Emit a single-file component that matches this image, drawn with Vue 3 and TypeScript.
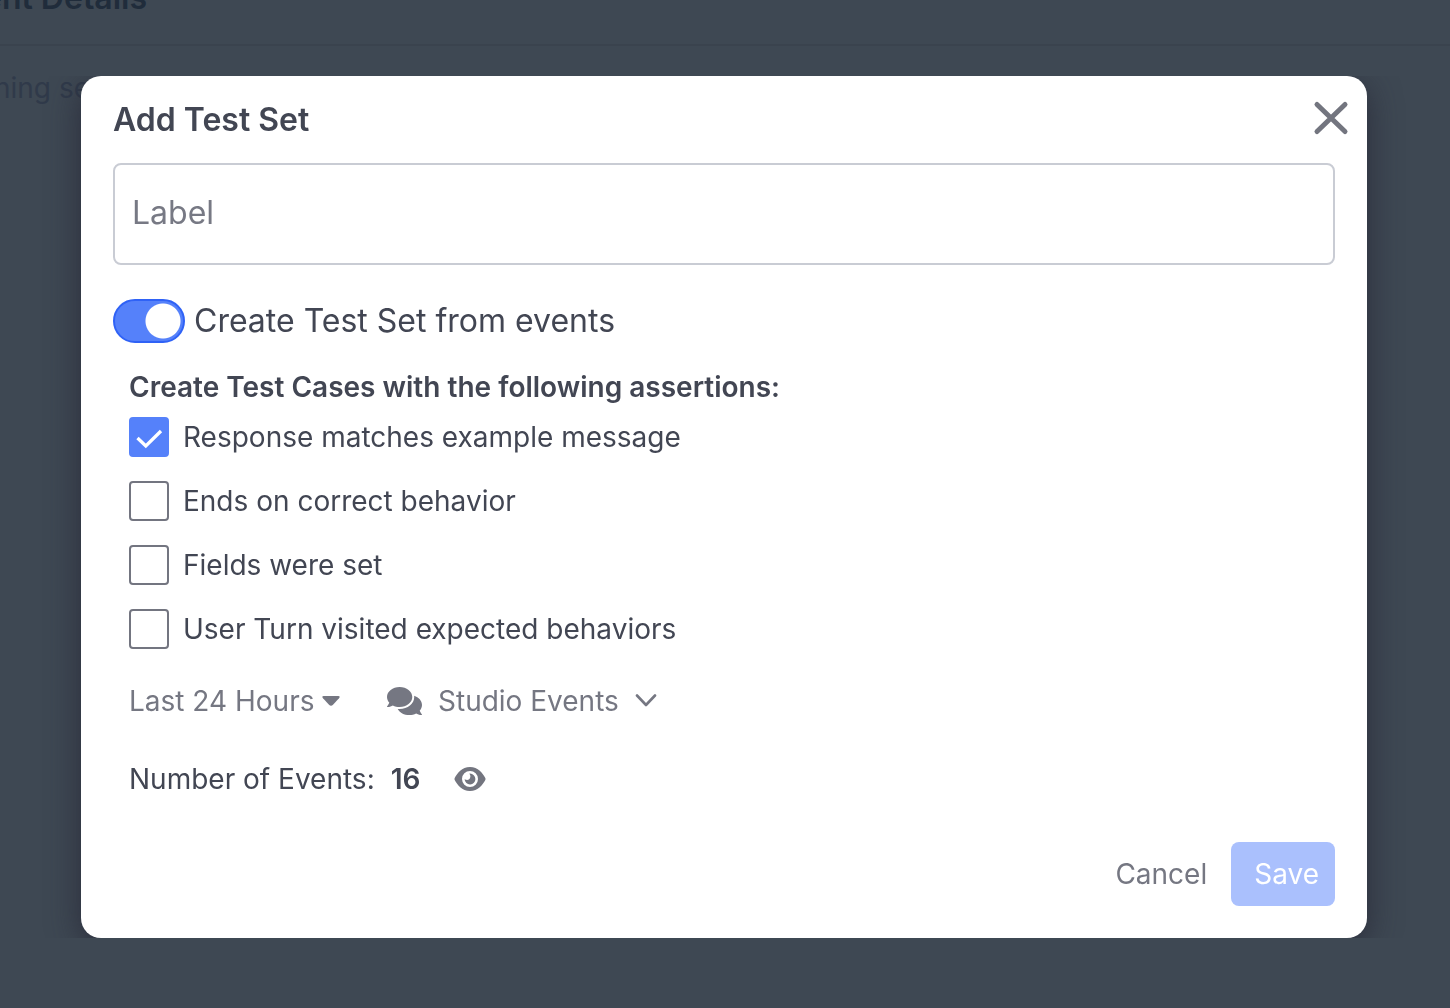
<script setup lang="ts">
import { ref } from 'vue'

interface Assertion {
  id: string
  label: string
  checked: boolean
}

const label = ref('')
const fromEvents = ref(true)
const range = ref('Last 24 Hours')
const source = ref('Studio Events')
const eventCount = ref(16)

const assertions = ref<Assertion[]>([
  { id: 'response', label: 'Response matches example message', checked: true },
  { id: 'behavior', label: 'Ends on correct behavior', checked: false },
  { id: 'fields', label: 'Fields were set', checked: false },
  { id: 'turn', label: 'User Turn visited expected behaviors', checked: false },
])
</script>

<template>
  <main class="page">
    <header class="page-header">
      <h1 class="page-title">ent Details</h1>
    </header>
    <p class="page-text">ning se</p>
  </main>

  <div class="overlay">
    <div class="frame">
      <form class="dialog" role="dialog" aria-labelledby="dialog-title" @submit.prevent>
        <header class="dialog-header">
          <h2 id="dialog-title" class="dialog-title">Add Test Set</h2>
          <button type="button" class="close" aria-label="Close">
            <svg width="36" height="36" viewBox="0 0 36 36" fill="none" stroke="currentColor" stroke-width="5" stroke-linecap="round">
              <path d="M4 4.500L32 31.500M32 4.500L4 31.500" />
            </svg>
          </button>
        </header>

        <input v-model="label" class="text-input" type="text" placeholder="Label" aria-label="Label" />

        <label class="toggle-row">
          <input v-model="fromEvents" class="toggle" type="checkbox" role="switch" />
          <span>Create Test Set from events</span>
        </label>

        <div class="options">
          <fieldset class="assertions">
            <legend>Create Test Cases with the following assertions:</legend>
            <label v-for="item in assertions" :key="item.id" class="check-row">
              <span class="check">
                <input v-model="item.checked" class="box" type="checkbox" />
                <svg v-if="item.checked" class="tick" width="40" height="40" viewBox="0 0 40 40" fill="none" stroke="#fff" stroke-width="3.300">
                  <path d="M8.500 21L16.800 29L32 14" />
                </svg>
              </span>
              <span>{{ item.label }}</span>
            </label>
          </fieldset>

          <div class="filters">
            <label class="filter">
              <select v-model="range" class="select" aria-label="Time range">
                <option>Last 24 Hours</option>
              </select>
              <svg width="18" height="12" viewBox="0 0 18 12" fill="currentColor">
                <path d="M1.600 1H16.400Q18.600 1.300 17 3.200L11 9.800Q9 11.800 7 9.800L1 3.200Q-.6 1.300 1.600 1Z" />
              </svg>
            </label>
            <label class="filter source">
              <svg width="35" height="28" viewBox="0 32 576 448" preserveAspectRatio="none" fill="currentColor">
                <path d="M416 192c0-88.400-93.100-160-208-160S0 103.600 0 192c0 34.300 14.100 65.900 38 92-13.400 30.200-35.500 54.200-35.800 54.500-2.200 2.300-2.800 5.700-1.500 8.700S4.800 352 8 352c36.600 0 66.900-12.300 88.700-25 32.200 15.700 70.300 25 111.300 25 114.900 0 208-71.600 208-160zm122 220c23.900-26 38-57.700 38-92 0-66.900-53.500-124.200-129.300-148.100.9 6.600 1.300 13.300 1.300 20.100 0 105.900-107.700 192-240 192-10.800 0-21.300-.8-31.700-1.900C207.800 439.600 281.800 480 368 480c41 0 79.100-9.200 111.300-25 21.800 12.700 52.100 25 88.700 25 3.200 0 6.100-1.900 7.300-4.800 1.300-2.900.7-6.300-1.500-8.700-.3-.3-22.400-24.200-35.800-54.500z" />
              </svg>
              <select v-model="source" class="select" aria-label="Event source">
                <option>Studio Events</option>
              </select>
              <svg width="22" height="14" viewBox="0 0 22 14" fill="none" stroke="currentColor" stroke-width="2.600" stroke-linecap="round" stroke-linejoin="round">
                <path d="M2 1.500L11 11L20 1.500" />
              </svg>
            </label>
          </div>

          <div class="count-row">
            <span>Number of Events:</span>
            <strong class="count">{{ eventCount }}</strong>
            <button type="button" class="preview" aria-label="Preview events">
              <svg width="32" height="24" viewBox="0 0 32 24" fill="currentColor">
                <path fill-rule="evenodd" d="M.7 11C3 6.500 8 0 16 0S29 6.500 31.300 11Q31.800 12 31.300 13C29 17.500 24 24 16 24S3 17.500 .7 13Q.2 12 .7 11ZM16 4A8 8 0 1 0 16 20A8 8 0 0 0 16 4Z" />
                <path d="M16 6.600A5.400 5.400 0 1 1 10.600 12.300Q14.500 14 16 11.200Q17 8.800 15.400 6.600Z" />
              </svg>
            </button>
          </div>
        </div>

        <footer class="actions">
          <button type="button" class="cancel">Cancel</button>
          <button type="submit" class="save" disabled>Save</button>
        </footer>
      </form>
    </div>
  </div>
</template>

<style>
body {
  margin: 0;
  background: #3e4853;
  font-family: Inter, "Liberation Sans", sans-serif;
}
</style>

<style scoped>
.page {
  overflow: hidden;
  height: 100vh;
  color: #303a4a;
}

.page-header {
  display: flex;
  align-items: flex-end;
  height: 44px;
  border-bottom: 2px solid #3a434e;
}

.page-title {
  margin: 0 0 26px -17px;
  color: #202c3b;
  font-size: 32px;
  font-weight: 600;
  line-height: 40px;
}

.page-text {
  margin: 24px 0 0 -6px;
  font-size: 28px;
  line-height: 36px;
}

.overlay {
  position: fixed;
  inset: 0;
  overflow-y: auto;
}

/* Clips the dialog shadow above and below, leaving it on the sides only. */
.frame {
  overflow: hidden;
  margin-top: 76px;
  padding: 0 83px 0 81px;
}

.dialog {
  box-sizing: border-box;
  padding: 24px 32px 32px;
  border-radius: 20px;
  background: #fff;
  box-shadow: 0 8px 32px rgb(38 38 52 / 80%);
  color: #424653;
  font-size: 28px;
  line-height: 40px;
}

button,
input,
select {
  margin: 0;
  font: inherit;
}

.dialog-header {
  display: flex;
  align-items: center;
  justify-content: space-between;
  height: 40px;
  margin-bottom: 23px;
}

.dialog-title {
  margin: 0;
  font-size: 32px;
  font-weight: 600;
  line-height: 40px;
}

.close {
  display: flex;
  margin: 0 -14px 4px 0;
  padding: 0;
  border: 0;
  background: none;
  color: #73757f;
}

.text-input {
  display: block;
  box-sizing: border-box;
  width: 100%;
  height: 102px;
  padding: 0 17px 4px;
  border: 2px solid #c9ccd4;
  border-radius: 8px;
  background: #fff;
  color: #424653;
  font-size: 32px;
}

.text-input::placeholder {
  color: #777984;
  opacity: 1;
}

.toggle-row {
  display: flex;
  align-items: center;
  gap: 9px;
  width: fit-content;
  margin-top: 34px;
  font-size: 32px;
  line-height: 44px;
}

.toggle {
  appearance: none;
  box-sizing: border-box;
  width: 72px;
  height: 44px;
  border: 2px solid #2f62f6;
  border-radius: 22px;
  background: radial-gradient(circle at 48px 20px, #fff 17px, #5581fa 18px);
}

.options {
  padding: 0 16px;
}

.assertions {
  display: flex;
  flex-direction: column;
  gap: 24px;
  min-width: 0;
  margin: 24px 0 0;
  padding: 0;
  border: 0;
}

.assertions legend {
  margin-bottom: 10px;
  padding: 0;
  font-weight: 600;
}

.check-row {
  display: flex;
  align-items: center;
  gap: 14px;
  width: fit-content;
}

.check {
  display: grid;
}

.box,
.tick {
  grid-area: 1 / 1;
}

.tick {
  pointer-events: none;
}

.box {
  appearance: none;
  box-sizing: border-box;
  width: 40px;
  height: 40px;
  border: 2px solid #737580;
  border-radius: 4px;
  background: #fff;
}

.box:checked {
  border-color: #5581fa;
  background: #5581fa;
}

.filters {
  display: flex;
  align-items: center;
  gap: 47px;
  margin-top: 32px;
  color: #757782;
}

.filter {
  display: flex;
  align-items: center;
  gap: 7px;
}

.source {
  gap: 16px;
}

.select {
  appearance: none;
  padding: 0;
  border: 0;
  background: none;
  color: inherit;
  line-height: 40px;
}

.count-row {
  display: flex;
  align-items: center;
  margin-top: 38px;
}

.count {
  margin: 0 34px 0 16px;
  font-weight: 600;
}

.preview {
  display: flex;
  padding: 0;
  border: 0;
  background: none;
  color: #73757f;
}

.actions {
  display: flex;
  justify-content: flex-end;
  gap: 24px;
  margin-top: 43px;
}

.cancel {
  padding: 0;
  border: 0;
  background: none;
  color: #757782;
}

.save {
  height: 64px;
  padding: 0 16px 0 23px;
  border: 0;
  border-radius: 8px;
  background: #aac0fd;
  color: #fff;
}
</style>
